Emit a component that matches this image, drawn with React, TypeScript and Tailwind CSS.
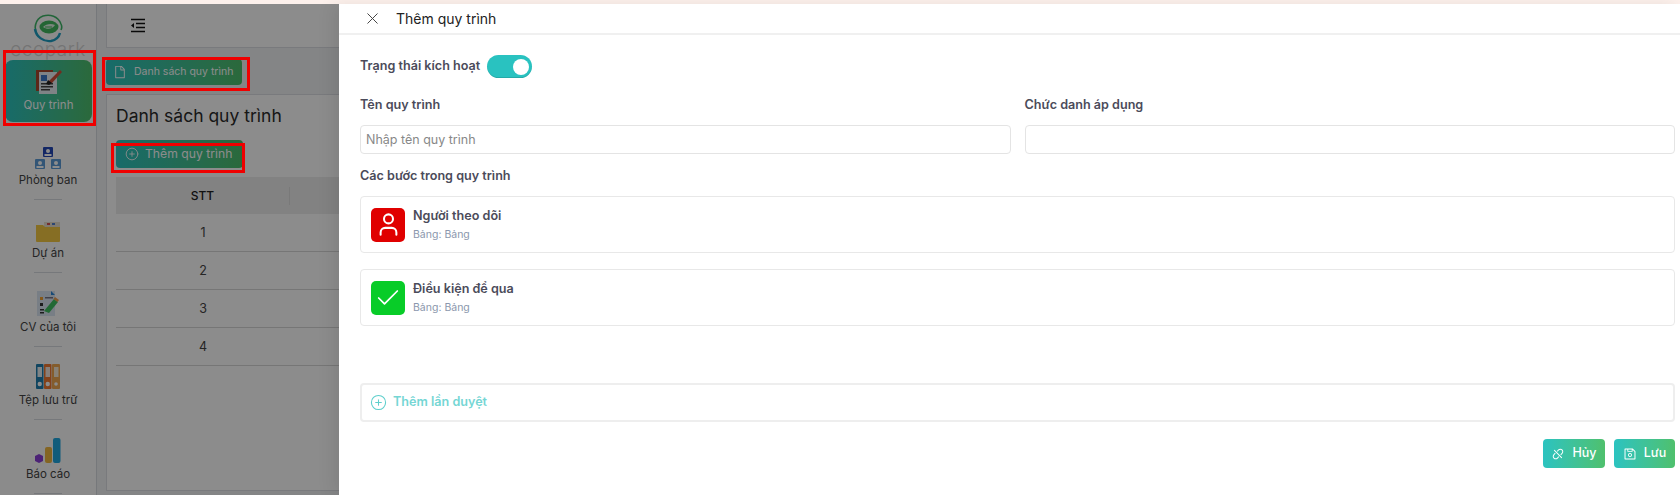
import React from 'react';
import { X, CirclePlus, User, Check } from 'lucide-react';
import { AiOutlineDisconnect, AiOutlineSave, AiOutlineFile } from 'react-icons/ai';

const LogoIcon = () => (
  <svg width="30" height="29" viewBox="0 0 30 29" fill="none" className="shrink-0">
    <path d="M5 22C0 15 2 5 10 2c7-2 15 0 18 8 1 2 1 4 0 6" stroke="#3fb868" strokeWidth="1.6" />
    <path d="M2 15c1 8 9 13 16 12 5-1 8-4 9-8" stroke="#1f9fc4" strokeWidth="2.4" />
    <ellipse cx="16" cy="13" rx="9.5" ry="6.5" fill="#43b95f" />
    <path d="M10 13c3-3 8-4 12-2-2 4-8 5-12 2z" fill="#dff3e4" />
    <path d="M12 13h7" stroke="#43b95f" strokeWidth="1" />
  </svg>
);

const HeaderMenuIcon = () => (
  <svg width="15" height="15" viewBox="0 0 15 15" fill="none" stroke="#111" strokeWidth="1.4">
    <path d="M1 1.5h14M6 5.5h9M6 9.5h9M1 13.5h14" />
    <path d="M4 5 1 7.5 4 10z" fill="#111" stroke="none" />
  </svg>
);

const ProcessIcon = () => (
  <svg width="26" height="26" viewBox="0 0 26 26" className="shrink-0">
    <rect x="0" y="1" width="17" height="21" fill="#a8482c" />
    <rect x="3" y="3" width="18" height="22" fill="#e8eef4" />
    <rect x="5" y="6" width="6" height="6" fill="#3c78c8" />
    <rect x="5" y="14" width="12" height="1.5" fill="#444" />
    <rect x="5" y="17" width="12" height="1.5" fill="#444" />
    <rect x="5" y="20" width="9" height="1.5" fill="#444" />
    <path d="M13 12 24 1l2 2-10 11-4 1z" fill="#d0503a" />
    <path d="M12 11l4 3-3 2-3-1z" fill="#222" />
  </svg>
);

const DeptIcon = () => (
  <svg width="26" height="22" viewBox="0 0 26 22">
    <rect x="8" y="0" width="10" height="10" rx="1" fill="#2447b8" />
    <circle cx="13" cy="4" r="2" fill="#fff" />
    <rect x="9.5" y="7" width="7" height="2" fill="#fff" />
    <rect x="0" y="12" width="10" height="10" rx="1" fill="#5b9bd8" />
    <circle cx="5" cy="16" r="2" fill="#fff" />
    <rect x="1.5" y="19" width="7" height="2" fill="#fff" />
    <rect x="16" y="12" width="10" height="10" rx="1" fill="#5b9bd8" />
    <circle cx="21" cy="16" r="2" fill="#fff" />
    <rect x="17.5" y="19" width="7" height="2" fill="#fff" />
  </svg>
);

const FolderIcon = () => (
  <svg width="24" height="20" viewBox="0 0 24 20">
    <rect x="8" y="0" width="16" height="6" fill="#e8e0d0" />
    <rect x="11" y="1" width="3" height="2" fill="#d85050" />
    <rect x="16" y="1" width="3" height="2" fill="#5080d0" />
    <path d="M0 3h7l2 2h15v14a1 1 0 0 1-1 1H1a1 1 0 0 1-1-1z" fill="#f5c842" />
  </svg>
);

const CvIcon = () => (
  <svg width="22" height="25" viewBox="0 0 22 25">
    <rect x="0" y="0" width="18" height="25" fill="#dbe6f2" />
    <path d="M14 0l4 4h-4z" fill="#2a88d8" />
    <rect x="3" y="6" width="3" height="3" fill="#f0a030" />
    <rect x="8" y="6" width="8" height="1.5" fill="#778" />
    <rect x="3" y="12" width="3" height="3" fill="#333" />
    <rect x="3" y="18" width="4" height="1.5" fill="#333" />
    <rect x="3" y="21" width="4" height="1.5" fill="#333" />
    <path d="M17 8l4 3-9 11-5-2z" fill="#3fc060" />
    <path d="M18 6l4 3-1.5 2-4-3z" fill="#f0a050" />
  </svg>
);

const BindersIcon = () => (
  <svg width="24" height="25" viewBox="0 0 24 25">
    <rect x="0" y="0" width="7.5" height="25" rx="1" fill="#1f7fb0" />
    <rect x="8" y="0" width="7.5" height="25" rx="1" fill="#f07830" />
    <rect x="16" y="0" width="8" height="25" rx="1" fill="#f0a850" />
    <rect x="1.5" y="3" width="4.5" height="10" fill="#e8f0f4" />
    <rect x="9.5" y="3" width="4.5" height="10" fill="#f8e8dc" />
    <rect x="18" y="3" width="4.5" height="10" fill="#f8ecd8" />
    <circle cx="3.75" cy="20" r="2.2" fill="#fff" />
    <circle cx="11.75" cy="20" r="2.2" fill="#fff" />
    <circle cx="20" cy="20" r="1.8" fill="#fff" />
  </svg>
);

const ChartIcon = () => (
  <svg width="26" height="25" viewBox="0 0 26 25">
    <path d="M0 18l4-2 4 2v5l-4 2-4-2z" fill="#8a3fd8" />
    <rect x="10" y="9" width="7" height="16" rx="2" fill="#f0b840" />
    <rect x="18" y="0" width="7.5" height="25" rx="2" fill="#20a8e0" />
  </svg>
);

const navItems = [
  { label: 'Phòng ban', icon: <DeptIcon /> },
  { label: 'Dự án', icon: <FolderIcon /> },
  { label: 'CV của tôi', icon: <CvIcon /> },
  { label: 'Tệp lưu trữ', icon: <BindersIcon /> },
  { label: 'Báo cáo', icon: <ChartIcon /> },
];

const steps = [
  { title: 'Người theo dõi', color: 'bg-[#e00000]', icon: <User size={27} strokeWidth={1.8} /> },
  { title: 'Điều kiện để qua', color: 'bg-[#08cc28]', icon: <Check size={28} strokeWidth={1.5} /> },
];

const greenBtn = 'bg-gradient-to-r from-[#2bc3c0] to-[#4fc06c] rounded text-white';

export default function App() {
  return (
    <div className="relative h-[495px] w-[1680px] overflow-hidden bg-white text-[#333] font-['Inter',sans-serif]">
      <div className="h-1 bg-[#fdf1ec]" />
      <div className="relative flex h-[491px]">
        {/* Sidebar */}
        <aside className="w-[97px] shrink-0 border-r border-[#d8dbe0] bg-[#fdfdfd] px-[5px]">
          <div className="flex h-[46px] flex-col items-center pt-[10px]">
            <LogoIcon />
            <span className="mt-[-3px] text-[19px] leading-[19px] font-light tracking-wide whitespace-nowrap text-[#d4d4d4]">ecopark</span>
          </div>
          <div className={`${greenBtn} relative mt-[10px] flex h-[62px] w-[87px] flex-col items-center justify-center rounded-lg`}>
            <ProcessIcon />
            <span className="mt-[2px] text-[11.5px] leading-4">Quy trình</span>
          </div>
          <div className="mt-[16px] flex flex-col items-center">
            {navItems.map((item) => (
              <div key={item.label} className="flex h-[73.4px] w-full flex-col items-center">
                <div className="flex h-[31px] items-end">{item.icon}</div>
                <span className="mt-[1px] text-[11.5px] leading-5 text-[#444]">{item.label}</span>
                <div className="mt-[9px] h-px w-7 bg-[#d8dbe0]" />
              </div>
            ))}
          </div>
        </aside>

        {/* Main */}
        <main className="flex-1 bg-[#f1f2f4] pr-0 pl-[9px]">
          <div className="flex h-11 items-center border border-t-0 border-[#dcdfe3] bg-white pl-[23px]">
            <HeaderMenuIcon />
          </div>
          <div className={`${greenBtn} mt-[11px] flex h-[26px] w-[136px] items-center gap-[7px] pl-[7px] text-[10.5px]`}>
            <AiOutlineFile size={14} />
            Danh sách quy trình
          </div>
          <div className="mt-[9px] h-[397px] border border-[#dcdfe3] bg-white pl-[9px]">
            <h2 className="mt-[9px] text-[17.5px] leading-6 text-[#2b2b2b]">Danh sách quy trình</h2>
            <div className={`${greenBtn} mt-[12px] flex h-7 w-[127px] items-center gap-[6px] pl-[9px] text-[12.2px]`}>
              <CirclePlus size={14} strokeWidth={1.5} />
              Thêm quy trình
            </div>
            <div className="mt-[9px] grid h-[37px] grid-cols-[174px_1fr] items-center bg-[#ededed] text-[12px] font-medium text-[#222]">
              <div className="border-r border-[#dddddd] text-center leading-[18px]">STT</div>
              <div />
            </div>
            {['1', '2', '3', '4'].map((n) => (
              <div key={n} className="h-[38px] border-b border-[#d8d8d8] text-[12.5px] leading-[38px] text-[#444]">
                <div className="w-[174px] text-center">{n}</div>
              </div>
            ))}
          </div>
        </main>

        {/* Overlay */}
        <div className="absolute inset-0 bg-black/45" />

        {/* Drawer */}
        <div className="absolute top-0 right-0 bottom-0 w-[1341px] bg-white shadow-[-6px_0_16px_rgba(0,0,0,0.08)]">
          <div className="flex h-[31px] items-center border-b-2 border-[#f0f0f0] pl-[24px] text-[14px] leading-5 text-[#222]">
            <X size={19} strokeWidth={1.25} className="text-[#444]" />
            <span className="ml-[14px]">Thêm quy trình</span>
          </div>

          <div className="pr-[5px] pl-[21px]">
            <div className="mt-[20px] flex h-[23px] items-center gap-[7px]">
              <span className="text-[12.6px] font-semibold text-[#4b4b5a]">Trạng thái kích hoạt</span>
              <div className="flex h-[23px] w-[45px] items-center justify-end rounded-full bg-[#29c2c0] pr-[3px] shadow-[inset_0_-1px_0_rgba(0,0,0,0.12)]">
                <div className="size-[16px] rounded-full bg-white" />
              </div>
            </div>

            <div className="mt-[17px] grid grid-cols-2 gap-[14px]">
              <div>
                <label className="block text-[12.6px] leading-5 font-semibold text-[#4b4b5a]">Tên quy trình</label>
                <input
                  placeholder="Nhập tên quy trình"
                  className="mt-[10px] h-[29px] w-full rounded border border-[#e4e4e4] px-[5px] text-[12.5px] outline-none placeholder:text-[#888]"
                />
              </div>
              <div>
                <label className="block text-[12.6px] leading-5 font-semibold text-[#4b4b5a]">Chức danh áp dụng</label>
                <input className="mt-[10px] h-[29px] w-full rounded border border-[#e4e4e4] px-[5px] outline-none" />
              </div>
            </div>

            <div className="mt-[12px] text-[12.6px] leading-5 font-semibold text-[#4b4b5a]">Các bước trong quy trình</div>

            <div className="mt-[10px] flex flex-col gap-[16px]">
              {steps.map((s) => (
                <div key={s.title} className="flex h-[57px] items-center gap-[8px] rounded border border-[#e8e8e8] pl-[10px]">
                  <div className={`${s.color} flex size-[34px] items-center justify-center rounded-[5px] text-white`}>
                    {s.icon}
                  </div>
                  <div>
                    <div className="text-[12.6px] leading-[18px] font-semibold text-[#4b4b5a]">{s.title}</div>
                    <div className="mt-[2px] text-[10.5px] leading-4 text-[#8b97ad]">Bảng: Bảng</div>
                  </div>
                </div>
              ))}
            </div>

            <div className="mt-[57px] flex h-[39px] items-center gap-[6px] rounded border-2 border-[#eeeeee] pl-[8px] text-[12.6px] font-semibold text-[#75d6d4]">
              <CirclePlus size={17} strokeWidth={1.5} className="text-[#5ecfcc]" />
              Thêm lần duyệt
            </div>

            <div className="mt-[17px] flex justify-end gap-[9px]">
              <button className={`${greenBtn} flex h-[29px] w-[62px] items-center justify-center gap-[7px] text-[12.5px] font-medium`}>
                <AiOutlineDisconnect size={14} />
                Hủy
              </button>
              <button className={`${greenBtn} flex h-[29px] w-[61px] items-center justify-center gap-[7px] text-[12.5px] font-medium`}>
                <AiOutlineSave size={14} />
                Lưu
              </button>
            </div>
          </div>
        </div>
      </div>

      {/* Red annotation boxes on the screenshot */}
      <div className="absolute top-[50px] left-[3px] h-[76px] w-[93px] border-[3px] border-[#f00000]" />
      <div className="absolute top-[57px] left-[102px] h-[34px] w-[148px] border-[3px] border-[#f00000]" />
      <div className="absolute top-[143px] left-[111px] h-[30px] w-[134px] border-[3px] border-[#f00000]" />
    </div>
  );
}
